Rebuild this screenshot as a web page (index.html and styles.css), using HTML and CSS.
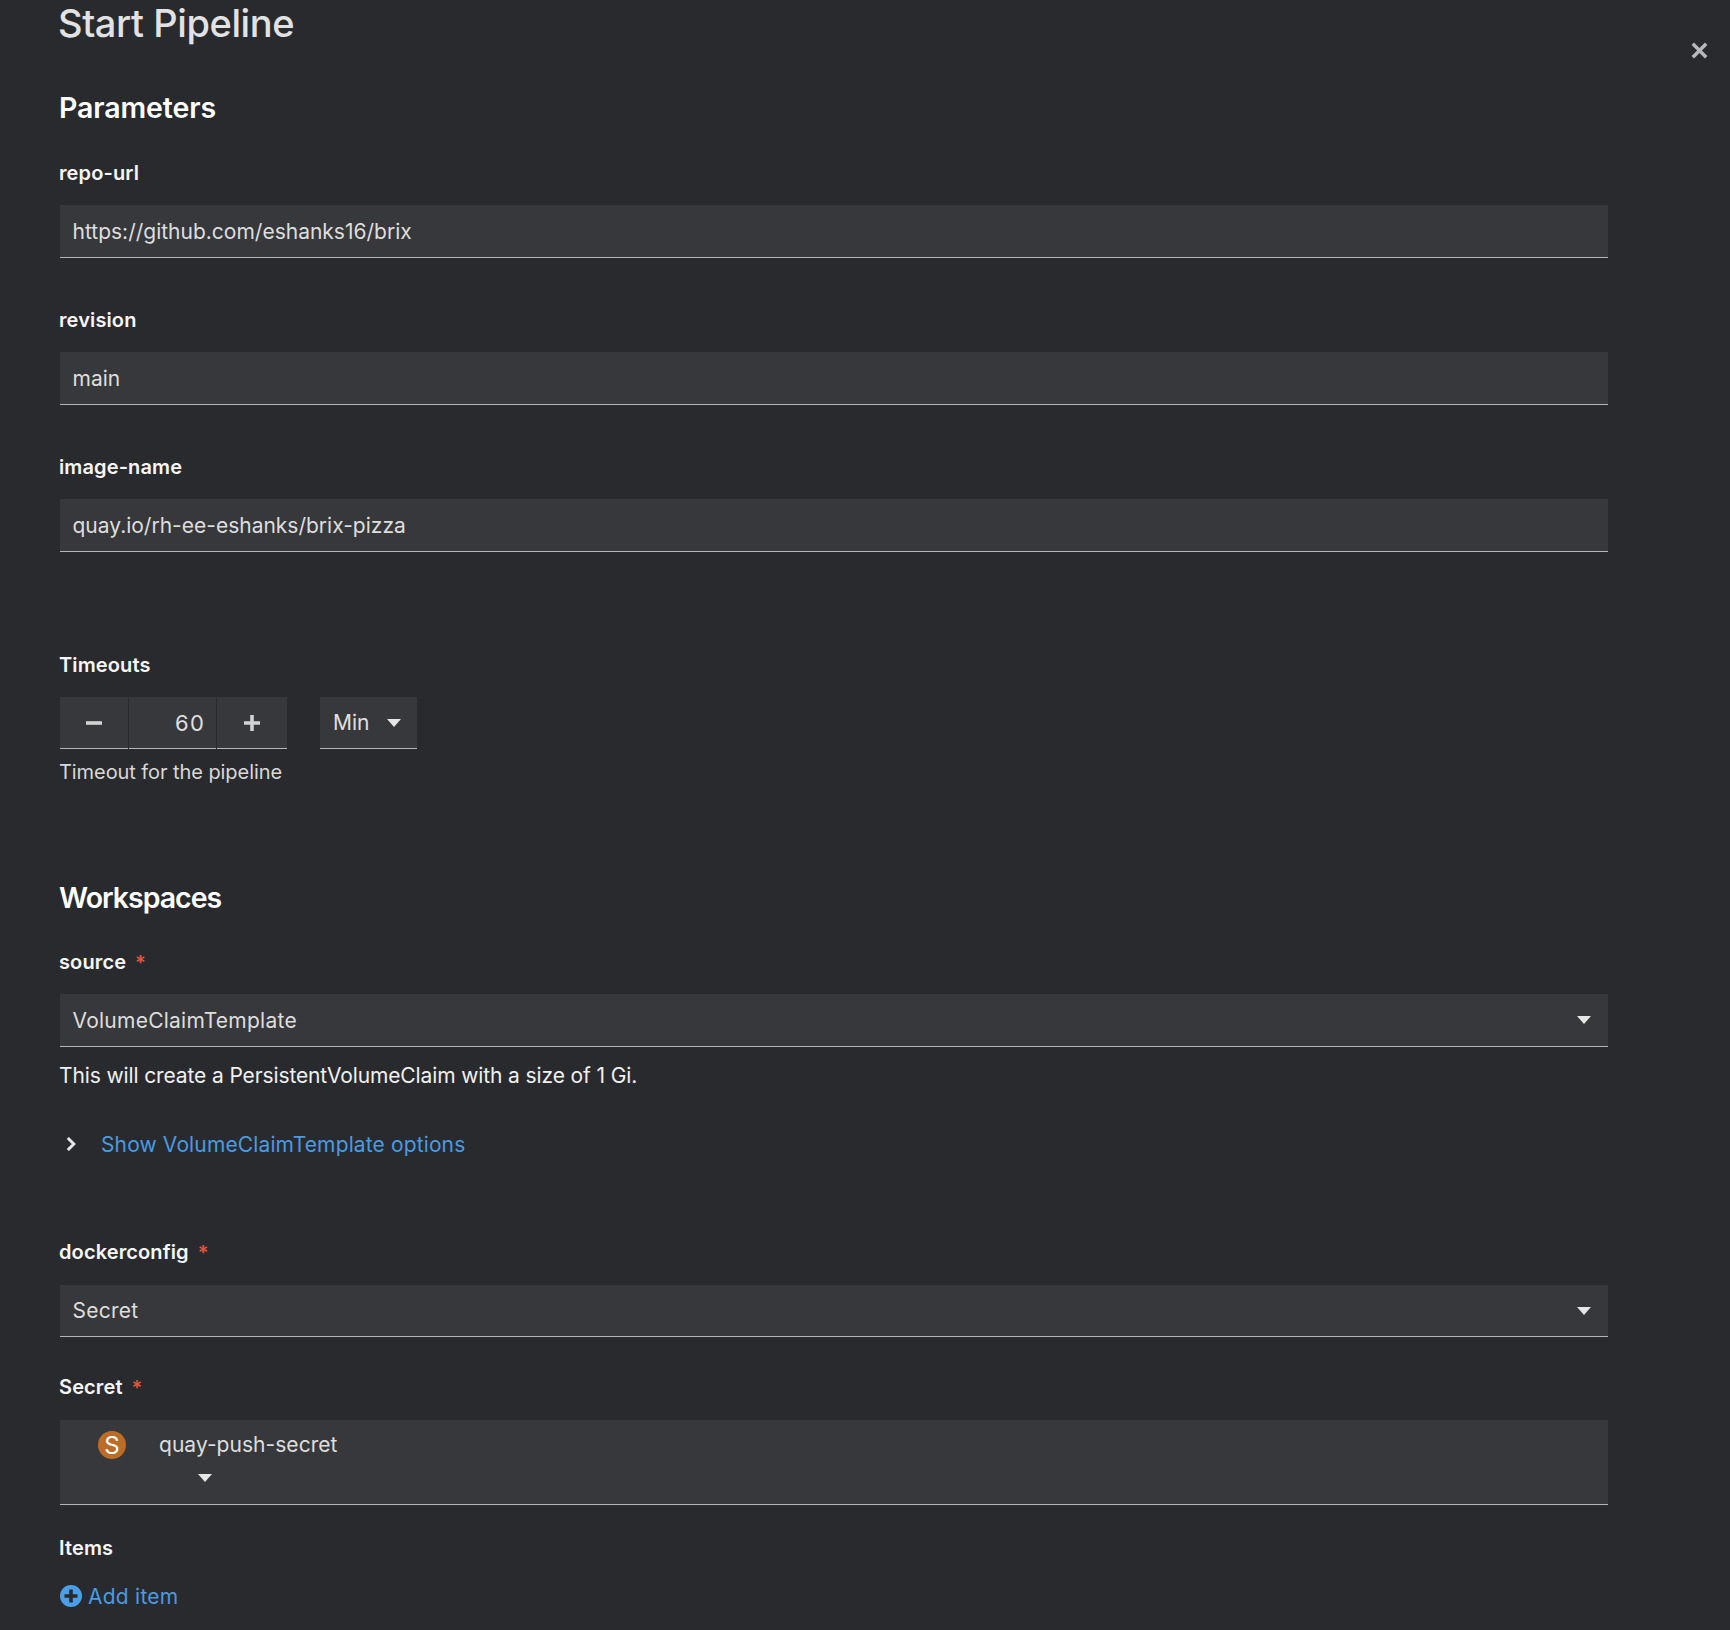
FILE: index.html
```html
<!DOCTYPE html>
<html lang="en">
<head>
<meta charset="utf-8">
<title>Start Pipeline</title>
<link rel="stylesheet" href="styles.css">
</head>
<body>
<main class="modal">
  <button class="close" aria-label="Close">
    <svg viewBox="0 0 17 17" width="17" height="17"><path d="M3 .6 8.500 6.100 14 .6 16.400 3 10.900 8.500 16.400 14 14 16.400 8.500 10.900 3 16.400 .6 14 6.100 8.500 .6 3Z" fill="#b8b9bb"/></svg>
  </button>
  <h1 class="title">Start Pipeline</h1>
  <h2 class="heading heading-params">Parameters</h2>

  <div class="label label-first">repo-url</div>
  <div class="control">https://github.com/eshanks16/brix</div>
  <div class="label label-next">revision</div>
  <div class="control">main</div>
  <div class="label label-next">image-name</div>
  <div class="control">quay.io/rh-ee-eshanks/brix-pizza</div>

  <div class="label label-timeouts">Timeouts</div>
  <div class="timeout">
    <div class="stepper">
      <div class="step step-minus"><svg viewBox="0 0 18 18" width="18" height="18"><rect x="1" y="7.200" width="16" height="3.600" fill="#d2d2d2"/></svg></div>
      <div class="step-value">60</div>
      <div class="step step-plus"><svg viewBox="0 0 18 18" width="18" height="18"><path d="M7.200 1h3.600v6.200H17v3.600h-6.200V17H7.200v-6.200H1V7.200h6.200Z" fill="#d2d2d2"/></svg></div>
    </div>
    <div class="unit">Min<svg class="caret caret-unit" viewBox="0 0 14 8" width="14" height="8"><path d="M0 0h14L7 8Z"/></svg></div>
  </div>
  <div class="help help-timeout">Timeout for the pipeline</div>

  <h2 class="heading heading-work">Workspaces</h2>
  <div class="label label-source">source<span class="req">*</span></div>
  <div class="control control-select control-source">VolumeClaimTemplate<svg class="caret" viewBox="0 0 14 8" width="14" height="8"><path d="M0 0h14L7 8Z"/></svg></div>
  <div class="help help-source">This will create a PersistentVolumeClaim with a size of 1 Gi.</div>
  <div class="toggle">
    <svg class="chevron" viewBox="0 0 10 14" width="10" height="14"><path d="M1.800 1 7.800 7l-6 6" fill="none" stroke="#e6e6e6" stroke-width="3"/></svg>
    <span class="link link-show">Show VolumeClaimTemplate options</span>
  </div>
  <div class="label label-docker">dockerconfig<span class="req">*</span></div>
  <div class="control control-select control-docker">Secret<svg class="caret" viewBox="0 0 14 8" width="14" height="8"><path d="M0 0h14L7 8Z"/></svg></div>
  <div class="label label-secret">Secret<span class="req">*</span></div>
  <div class="secret-box">
    <div class="secret-line"><span class="badge">S</span><span class="secret-name">quay-push-secret</span></div>
    <svg class="caret caret-secret" viewBox="0 0 14 8" width="14" height="8"><path d="M0 0h14L7 8Z"/></svg>
  </div>
  <div class="label label-items">Items</div>
  <div class="add">
    <svg viewBox="0 0 22 22" width="22" height="22"><circle cx="11" cy="11" r="11" fill="#4a9fe8"/><path d="M9.200 4.500h3.600v4.700h4.700v3.600h-4.700v4.700H9.200v-4.700H4.500V9.200h4.700Z" fill="#292a2e"/></svg>
    <span class="link link-add">Add item</span>
  </div>
</main>
</body>
</html>
```
FILE: styles.css
```css
* { box-sizing: border-box; }
html, body { margin: 0; padding: 0; height: 1630px; overflow: hidden; background: #292a2e; }
body { font-family: "Inter", "Noto Sans", sans-serif; color: #e0e0e0; font-size: 21px; }
.modal { position: relative; height: 1630px; padding-left: 60px; display: flex; flex-direction: column; align-items: flex-start; }
.close { position: absolute; left: 1691px; top: 42px; width: 17px; height: 17px; padding: 0; border: 0; background: none; display: flex; }
.title { margin: 0 0 0 -2px; height: 48px; line-height: 47px; font-size: 38px; font-weight: 500; color: #e2e2e2; letter-spacing: -0.4px; }
.heading { margin: 0 0 0 -1px; height: 32px; line-height: 32px; font-size: 28.500px; font-weight: 600; color: #fff; }
.heading-params { margin-top: 44px; letter-spacing: -0.1px; }
.heading-work { margin-top: 98px; letter-spacing: -1px; }
.label { margin-left: -1px; height: 24px; line-height: 24px; font-size: 20px; font-weight: 600; color: #f6f6f6; letter-spacing: 0.12px; display: flex; }
.label-first { margin-top: 37px; }
.label-next { margin-top: 50px; }
.label-timeouts { margin-top: 101px; }
.label-source { margin-top: 36px; }
.label-docker { margin-top: 84px; }
.label-secret { margin-top: 38px; }
.label-items { margin-top: 31px; }
.req { color: #e0553a; margin-left: 9px; margin-top: 1px; }
.control { width: 1548px; height: 53px; margin-top: 20px; padding: 0 13px 0 12.500px; background: #37383b; border-bottom: 1px solid #b5b5b7; display: flex; align-items: center; justify-content: space-between; font-size: 21px; letter-spacing: 0; color: #dedede; }
.control-select { margin-top: 21px; padding-right: 17px; letter-spacing: 0.25px; }
.control-source { margin-top: 20px; }
.control-docker { height: 52px; }
.caret { width: 14px; height: 8px; fill: #e6e6e6; }
.timeout { margin-top: 20px; display: flex; gap: 33px; }
.stepper { display: flex; gap: 1px; }
.step, .step-value, .unit { height: 52px; background: #37383b; border-bottom: 1px solid #b5b5b7; display: flex; align-items: center; }
.step { justify-content: center; }
.step-minus { width: 68px; }
.step-value { width: 87px; justify-content: flex-end; padding-right: 11px; font-size: 22px; letter-spacing: 1.2px; }
.step-plus { width: 70px; }
.unit { width: 97px; padding: 0 16px 0 13px; justify-content: space-between; letter-spacing: 0; }
.help { height: 24px; line-height: 24px; font-size: 20px; letter-spacing: -0.07px; }
.help-timeout { margin-top: 11px; margin-left: -1px; color: #d8d8d8; }
.help-source { margin-top: 17px; margin-left: -1px; color: #f0f0f0; font-size: 21px; letter-spacing: -0.12px; }
.toggle { margin-top: 44px; height: 24px; display: flex; align-items: center; gap: 25px; padding-left: 6px; }
.link { color: #4a9be0; font-size: 21px; }
.link-show { letter-spacing: 0.13px; }
.link-add { letter-spacing: 0.25px; }
.secret-box { width: 1548px; height: 85px; margin-top: 21px; background: #37383b; border-bottom: 1px solid #b5b5b7; position: relative; font-size: 21px; color: #dedede; }
.secret-line { display: flex; align-items: center; gap: 33px; padding: 11px 0 0 38px; height: 39px; }
.secret-name { letter-spacing: 0.04px; margin-top: -2px; }
.badge { width: 28px; height: 28px; border-radius: 50%; background: #bb6c26; color: #fff; display: flex; align-items: center; justify-content: center; font-size: 24px; }
.caret-secret { position: absolute; left: 138px; top: 54px; }
.add { margin-top: 24px; height: 24px; display: flex; align-items: center; gap: 6px; }
```
